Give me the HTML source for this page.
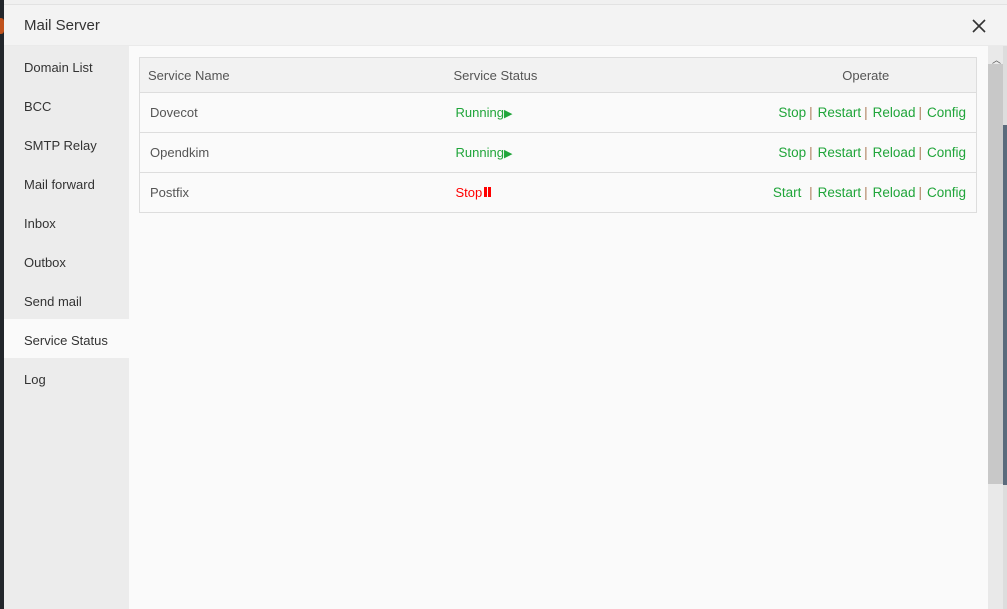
<!DOCTYPE html>
<html><head><style>
*{margin:0;padding:0;box-sizing:border-box}
body{width:1007px;height:609px;overflow:hidden;background:#fafafa;font-family:"Liberation Sans",sans-serif;font-size:13px;color:#555;position:relative}
.strip{position:absolute;left:0;top:0;width:4px;height:609px;background:#22262b}
.strip i{position:absolute;left:0;top:18px;width:4px;height:16px;background:#c0521c;border-radius:0 3px 3px 0}
.top{position:absolute;left:4px;top:0;width:1003px;height:5px;background:#f0f0f0;border-bottom:1px solid #e2e2e2}
.hdr{position:absolute;left:4px;top:5px;width:1003px;height:41px;background:#f3f3f3;border-bottom:1px solid #eaeaea}
.hdr span{position:absolute;left:20px;top:12px;font-size:15px;color:#333}
.x{position:absolute;left:970px;top:17px;width:18px;height:18px}
.side{position:absolute;left:4px;top:46px;width:125px;height:563px;background:#ececec}
.side div{height:39px;line-height:44px;padding-left:20px;color:#333;font-size:13px}
.side .act{background:#fafafa}
.sb{position:absolute;left:988px;top:46px;width:15px;height:563px;background:#e9e9e9}
.sb .th{position:absolute;left:0;top:18px;width:15px;height:420px;background:#c8c8c8}
.sb .up{position:absolute;left:4px;top:7px;font-size:9px;color:#555}
.rs{position:absolute;left:1003px;top:46px;width:4px;height:563px;background:#ddd}
.rs2{position:absolute;left:1003px;top:125px;width:4px;height:360px;background:#5a6b7c}
table{position:absolute;left:139px;top:57px;width:838px;border-collapse:collapse;background:#fafafa}
td,th{border-top:1px solid #ddd;border-bottom:1px solid #ddd;font-weight:normal;text-align:left}
table{border:1px solid #ddd}
th{height:35px;background:#f2f2f2;color:#555;padding-left:8px}
td{height:40px;padding-left:10px;color:#555}
.g{color:#20a53a}.r{color:#f00}
.op{text-align:right;padding-right:10px;font-size:13.5px}
.op span.s{color:#b08060;margin:0 5px 0 3px}
</style></head><body>
<div class="strip"><i></i></div>
<div class="top"></div>
<div class="hdr"><span>Mail Server</span></div>
<svg class="x" viewBox="0 0 18 18"><path d="M3 3L15 15M15 3L3 15" stroke="#333" stroke-width="1.6"/></svg>
<div class="side">
<div>Domain List</div><div>BCC</div><div>SMTP Relay</div><div>Mail forward</div><div>Inbox</div><div>Outbox</div><div>Send mail</div><div class="act">Service Status</div><div>Log</div>
</div>
<table>
<tr><th style="width:306px">Service Name</th><th style="width:300px">Service Status</th><th style="text-align:center;padding-left:10px">Operate</th></tr>
<tr><td>Dovecot</td><td class="g">Running<span style="font-size:11px">▶</span></td><td class="op g">Stop<span class="s">|</span>Restart<span class="s">|</span>Reload<span class="s">|</span>Config</td></tr>
<tr><td>Opendkim</td><td class="g">Running<span style="font-size:11px">▶</span></td><td class="op g">Stop<span class="s">|</span>Restart<span class="s">|</span>Reload<span class="s">|</span>Config</td></tr>
<tr><td>Postfix</td><td class="r">Stop<span style="display:inline-block;width:3px;height:10px;background:#f00;margin-left:2px"></span><span style="display:inline-block;width:3px;height:10px;background:#f00;margin-left:1px"></span></td><td class="op g">Start <span class="s" style="margin-left:4px">|</span>Restart<span class="s">|</span>Reload<span class="s">|</span>Config</td></tr>
</table>
<div class="sb"><div class="th"></div><div class="up">︿</div></div>
<div class="rs"></div><div class="rs2"></div>
</body></html>
